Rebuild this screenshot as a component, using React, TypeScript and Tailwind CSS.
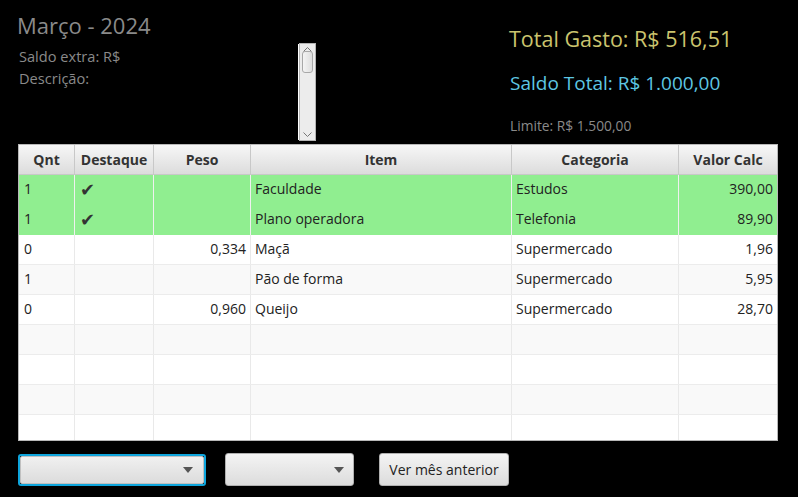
import React from "react";

const font = { fontFamily: '"Open Sans", "Noto Sans", sans-serif' };

type Row = { q: string; d: boolean; p: string; item: string; cat: string; v: string; green?: boolean };

const rows: Row[] = [
  { q: "1", d: true, p: "", item: "Faculdade", cat: "Estudos", v: "390,00", green: true },
  { q: "1", d: true, p: "", item: "Plano operadora", cat: "Telefonia", v: "89,90", green: true },
  { q: "0", d: false, p: "0,334", item: "Maçã", cat: "Supermercado", v: "1,96" },
  { q: "1", d: false, p: "", item: "Pão de forma", cat: "Supermercado", v: "5,95" },
  { q: "0", d: false, p: "0,960", item: "Queijo", cat: "Supermercado", v: "28,70" },
  { q: "", d: false, p: "", item: "", cat: "", v: "" },
  { q: "", d: false, p: "", item: "", cat: "", v: "" },
  { q: "", d: false, p: "", item: "", cat: "", v: "" },
  { q: "", d: false, p: "", item: "", cat: "", v: "" },
];

const cols = "grid grid-cols-[56px_79px_97px_261px_167px_98px]";

function Arrow() {
  return (
    <svg width="10" height="6" viewBox="0 0 10 6">
      <path d="M0 0 L10 0 L5 6 Z" fill="#555" />
    </svg>
  );
}

export default function App() {
  return (
    <div className="w-[798px] h-[497px] bg-black overflow-hidden" style={font}>
      <div className="flex h-[144px]">
        <div className="w-[280px] pl-[17px] pt-[11px]">
          <div className="text-[22px] leading-[28px] text-[#8a8a8a]">Março - 2024</div>
          <div className="pl-[2px] mt-[6px] text-[14.6px] leading-[22px] text-[#8a8a8a]">Saldo extra: R$</div>
          <div className="pl-[2px] text-[14.6px] leading-[22px] text-[#8a8a8a]">Descrição:</div>
        </div>
        <div className="ml-[18px] mt-[43px] flex h-[98px]">
          <div className="w-[1px] h-[96px] mt-[1px] bg-white" />
          <div className="w-[17px] h-[98px] bg-[#ececec] border border-[#b4b4b4] flex flex-col items-center justify-between py-[3px]">
            <svg width="9" height="5" viewBox="0 0 9 5">
              <path d="M0.5 4.5 L4.5 0.5 L8.5 4.5" stroke="#777" fill="none" />
            </svg>
            <div className="w-[11px] h-[22px] rounded-[3px] border border-[#a8a8a8] bg-gradient-to-r from-[#f4f4f4] to-[#dedede] -mt-[1px]" />
            <div className="flex-1" />
            <svg width="9" height="5" viewBox="0 0 9 5">
              <path d="M0.5 0.5 L4.5 4.5 L8.5 0.5" stroke="#777" fill="none" />
            </svg>
          </div>
        </div>
        <div className="ml-[193px] pt-[24px]">
          <div className="text-[21.5px] leading-[30px] text-[#cbc46e]">Total Gasto: R$ 516,51</div>
          <div className="mt-[16px] pl-[1px] text-[19px] leading-[26px] text-[#5ec7e3]">Saldo Total: R$ 1.000,00</div>
          <div className="mt-[21px] pl-[1px] text-[13.8px] leading-[18px] text-[#8a8a8a]">Limite: R$ 1.500,00</div>
        </div>
      </div>

      <div className="ml-[18px] w-[760px] h-[297px] bg-white border border-[#b8b8b8] overflow-hidden text-[14px] text-[#222]">
        <div className={`${cols} h-[30px] bg-gradient-to-b from-[#f7f7f7] to-[#dcdcdc] border-b border-[#c8c8c8] font-bold text-[#333]`}>
          {["Qnt", "Destaque", "Peso", "Item", "Categoria", "Valor Calc"].map((h) => (
            <div key={h} className="flex items-center justify-center pb-[1px] border-r border-[#c8c8c8] last:border-r-0">
              {h}
            </div>
          ))}
        </div>
        {rows.map((r, i) => {
          const bg = r.green ? "bg-[#90ee90]" : i % 2 === 0 ? "bg-white border-b border-[#ececec]" : "bg-[#f9f9f9] border-b border-[#ececec]";
          const line = r.green ? "border-[#f0f0f0]" : "border-[#e9e9e9]";
          return (
            <div key={i} className={`${cols} h-[30px] ${bg}`}>
              <div className={`flex items-center pb-[3px] pl-[5px] border-r ${line}`}>{r.q}</div>
              <div className={`flex items-center pb-[2px] pl-[5px] border-r ${line} text-[#333] text-[18px]`}>{r.d ? "✔" : ""}</div>
              <div className={`flex items-center pb-[3px] justify-end pr-[4px] border-r ${line}`}>{r.p}</div>
              <div className={`flex items-center pb-[3px] pl-[4px] border-r ${line}`}>{r.item}</div>
              <div className={`flex items-center pb-[3px] pl-[4px] border-r ${line}`}>{r.cat}</div>
              <div className="flex items-center pb-[3px] justify-end pr-[4px]">{r.v}</div>
            </div>
          );
        })}
      </div>

      <div className="flex items-center mt-[12px]">
        <div className="ml-[18px] w-[188px] h-[32px] rounded-[3px] border-[2px] border-[#0ea5dc] p-0">
          <div className="h-full w-full rounded-[2px] border border-[#c0c0c0] bg-gradient-to-b from-[#f0f0f0] to-[#dcdcdc] flex items-center justify-end pr-[10px]">
            <Arrow />
          </div>
        </div>
        <div className="ml-[19px] w-[129px] h-[33px] rounded-[3px] border border-[#b0b0b0] bg-gradient-to-b from-[#f4f4f4] to-[#dcdcdc] flex items-center justify-end pr-[9px]">
          <Arrow />
        </div>
        <div className="ml-[25px] w-[130px] h-[33px] rounded-[3px] border border-[#b0b0b0] bg-gradient-to-b from-[#f4f4f4] to-[#dcdcdc] flex items-center justify-center text-[14px] text-[#222]">
          Ver mês anterior
        </div>
      </div>
    </div>
  );
}
